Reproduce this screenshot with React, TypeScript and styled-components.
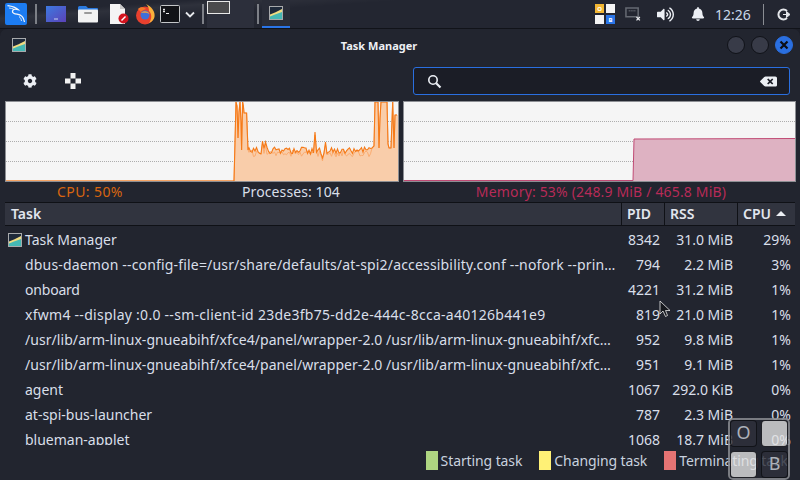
import React from 'react';
import styled, { createGlobalStyle } from 'styled-components';
import { FaBackspace, FaBell, FaCog, FaVolumeUp } from 'react-icons/fa';

const GlobalStyle = createGlobalStyle`
  html, body {
    margin: 0;
    width: 800px;
    height: 480px;
    overflow: hidden;
    background: #1d1f28;
    font-family: 'Noto Sans', sans-serif;
  }
  * { box-sizing: border-box; }
`

const Screen = styled.div`
  position: relative;
  display: flex;
  flex-direction: column;
  width: 800px;
  height: 480px;
  overflow: hidden;
`

const Panel = styled.div`
  display: flex;
  align-items: center;
  height: 29px;
  flex-shrink: 0;
  padding: 0 0 0 5px;
  background:
    linear-gradient(176deg, transparent 0 16%, rgba(255,255,255,0.05) 22%, transparent 34%),
    #232631;
  border-bottom: 1px solid #111319;
`

const Launcher = styled.div<{ $width: number, $left?: number }>`
  display: flex;
  align-items: center;
  justify-content: center;
  width: ${p => p.$width}px;
  height: 26px;
  margin-left: ${p => p.$left ?? 0}px;
  flex-shrink: 0;
`

const Separator = styled.div<{ $left: number }>`
  width: 2px;
  height: 20px;
  margin-left: ${p => p.$left}px;
  background: #7d8087;
  flex-shrink: 0;
`

const Workspaces = styled.div`
  display: grid;
  grid-template-columns: 23px 24px;
  width: 47px;
  height: 28px;
  margin-left: 3px;
  background: #2c2f3b;
  align-self: flex-start;
  flex-shrink: 0;
`

const ActiveWorkspace = styled.div`
  width: 23px;
  height: 13px;
  margin-top: 1px;
  background: #4a4a4c;
  border: 1px solid #e8e8e8;
`

const TaskButton = styled.div`
  display: flex;
  align-items: center;
  justify-content: center;
  width: 28px;
  height: 28px;
  margin-left: 3px;
  background: #2a2d38;
  border-bottom: 2px solid #2a75e8;
  flex-shrink: 0;
`

const Spacer = styled.div`
  flex: 1;
`

const Tray = styled.div`
  display: flex;
  align-items: center;
  height: 28px;
  color: #eceff4;
`

const KeyGrid = styled.div`
  display: grid;
  grid-template-columns: 11px 11px;
  grid-template-rows: 11px 11px;
  gap: 0;
  width: 22px;
  margin-right: 9px;
`

const KeyTile = styled.div<{ $bg: string }>`
  display: flex;
  align-items: center;
  justify-content: center;
  background: ${p => p.$bg};
  border: 0.5px solid #232631;
  color: #fff;
  font-size: 6px;
  font-weight: 700;
  line-height: 1;
`

const Clock = styled.span`
  width: 34px;
  margin-left: 10px;
  font-size: 14px;
  color: #c9d8ea;
`

const TraySep = styled.div`
  width: 1px;
  height: 21px;
  margin: 0 13px 0 14px;
  background: #8a8d93;
`

const Win = styled.div`
  flex: 1;
  display: flex;
  flex-direction: column;
  min-height: 0;
  background: #22252f;
  border-radius: 7px 7px 0 0;
`

const TitleBar = styled.div`
  position: relative;
  display: flex;
  align-items: center;
  justify-content: space-between;
  height: 32px;
  padding: 0 7px 0 12px;
  flex-shrink: 0;
`

const Title = styled.div`
  position: absolute;
  left: 0;
  right: 42px;
  text-align: center;
  font-size: 11px;
  font-weight: 700;
  color: #eef0f4;
`

const WinButtons = styled.div`
  display: flex;
  gap: 6px;
  z-index: 1;
`

const WinButton = styled.div<{ $close?: boolean }>`
  display: flex;
  align-items: center;
  justify-content: center;
  width: 18px;
  height: 18px;
  border-radius: 50%;
  background: ${p => p.$close ? '#2a6fe0' : '#383b48'};
  border: 1px solid ${p => p.$close ? '#2a6fe0' : '#101218'};
`

const Toolbar = styled.div`
  display: flex;
  align-items: center;
  height: 40px;
  padding: 0 10px 0 23px;
  flex-shrink: 0;
  color: #eceff4;
`

const ToolIcon = styled.div<{ $width: number }>`
  display: flex;
  align-items: center;
  width: ${p => p.$width}px;
  margin-top: -1px;
`

const Search = styled.div`
  display: flex;
  align-items: center;
  justify-content: space-between;
  width: 377px;
  height: 28px;
  margin-left: auto;
  padding: 0 12px 0 13px;
  background: #1b1d26;
  border: 1px solid #2a6fe0;
  border-radius: 3px;
  color: #eceff4;
`

const Graphs = styled.div`
  display: grid;
  grid-template-columns: 394px 393px;
  gap: 4px;
  padding: 0 5px;
  flex-shrink: 0;
`

const Graph = styled.div`
  height: 81px;
  background: #f5f5f5;
  border: 1px solid #8d8f94;
  svg { display: block; }
`

const Status = styled.div`
  display: grid;
  grid-template-columns: 170px 232px 1fr;
  height: 19px;
  padding: 0 5px;
  font-size: 14px;
  line-height: 19px;
  text-align: center;
  flex-shrink: 0;
`

const StatusText = styled.div<{ $color: string, $tracking?: number }>`
  color: ${p => p.$color};
  letter-spacing: ${p => p.$tracking ?? 0}px;
  white-space: nowrap;
`

const columns = '616px 43px 73px 58px';

const Header = styled.div`
  display: grid;
  grid-template-columns: ${columns};
  height: 24px;
  margin: 1px 5px 0;
  background: #31343f;
  border-top: 1px solid #0f1116;
  border-bottom: 1px solid #0f1116;
  flex-shrink: 0;
`

const HeaderCell = styled.div<{ $first?: boolean }>`
  display: flex;
  align-items: center;
  gap: 5px;
  padding-left: ${p => p.$first ? 6 : 5}px;
  padding-bottom: 1px;
  border-left: ${p => p.$first ? 'none' : '1px solid #0f1116'};
  font-size: 14px;
  font-weight: 600;
  color: #e2e6ee;
`

const SortArrow = styled.div`
  width: 0;
  height: 0;
  border-left: 5px solid transparent;
  border-right: 5px solid transparent;
  border-bottom: 5px solid #eceff4;
`

const Rows = styled.div`
  flex: 1;
  min-height: 0;
  overflow: hidden;
  padding: 1px 5px 0;
`

const Row = styled.div`
  display: grid;
  grid-template-columns: ${columns};
  height: 25px;
  align-items: center;
  font-size: 14px;
  color: #d9dfe9;
`

const TaskCell = styled.div<{ $top: boolean }>`
  display: flex;
  align-items: center;
  gap: 3px;
  padding-left: ${p => p.$top ? 3 : 20}px;
  padding-right: 4px;
  min-width: 0;
`

const TaskName = styled.span<{ $tracking: number }>`
  white-space: nowrap;
  letter-spacing: ${p => p.$tracking}px;
`

const NumCell = styled.div`
  padding-right: 4px;
  text-align: right;
  white-space: nowrap;
`

const Legend = styled.div`
  display: flex;
  align-items: center;
  justify-content: flex-end;
  height: 35px;
  padding: 0 12px 5px 0;
  font-size: 14px;
  letter-spacing: -0.1px;
  color: #c9d2df;
  flex-shrink: 0;
`

const LegendItem = styled.div`
  display: flex;
  align-items: center;
  gap: 3px;
  margin-left: 17px;
  white-space: nowrap;
`

const Swatch = styled.div<{ $color: string }>`
  width: 12px;
  height: 19px;
  background: ${p => p.$color};
`

const StickyKeys = styled.div`
  position: absolute;
  left: 728px;
  top: 418px;
  display: grid;
  grid-template-columns: 27px 27px;
  grid-template-rows: 27px 27px;
  gap: 4px;
  width: 62px;
  height: 62px;
  border-radius: 5px;
  border: 2px solid rgba(138, 140, 144, 0.85);
`

const StickyKey = styled.div<{ $lit?: boolean }>`
  display: flex;
  align-items: center;
  justify-content: center;
  padding-bottom: 3px;
  border-radius: 4px;
  border: 1px solid rgba(15, 17, 22, 0.9);
  background: ${p => p.$lit ? 'rgba(226, 226, 226, 0.8)' : 'rgba(46, 49, 60, 0.82)'};
  color: #adb2ba;
  font-size: 18px;
`

const Pointer = styled.svg`
  position: absolute;
  left: 659px;
  top: 300px;
`

const AppIcon: React.FC<{ size?: number }> = ({ size = 14 }) => (
  <svg width={size} height={size} viewBox="0 0 14 14">
    <rect x="0.5" y="0.5" width="13" height="13" fill="#1f2a3a" stroke="#a8aaac" />
    <path d="M1 13V8.5L6 6.5L13 3V13Z" fill="#f0dc82" />
    <path d="M1 13V10.5L6 8.5L13 6V13Z" fill="#45b8b4" />
  </svg>
);

const KaliLogo = () => (
  <svg width="22" height="22" viewBox="0 0 22 22">
    <rect x="0" y="0" width="22" height="22" rx="2" fill="#1c7cf2" />
    <path d="M2.5 2.5C6 3 10 3.5 13 6.5C10.5 5.8 8 6.3 7.5 8C7 10 9.5 11 12 11.2C15.5 11.5 18.5 13 19.5 19" fill="none" stroke="#f2f6fb" strokeWidth="1.3" />
    <path d="M4 5C5.5 5.2 7 5.4 8.5 6M14 13.5C15.5 14.5 16.2 16 16.5 18" fill="none" stroke="#f2f6fb" strokeWidth="0.9" />
  </svg>
);

const DesktopIcon = () => (
  <svg width="20" height="16" viewBox="0 0 20 16">
    <defs>
      <linearGradient id="desk" x1="0" y1="0" x2="1" y2="1">
        <stop offset="0" stopColor="#3d7ae0" />
        <stop offset="1" stopColor="#5b42b8" />
      </linearGradient>
    </defs>
    <rect width="20" height="16" fill="url(#desk)" />
    <rect x="8" y="12.5" width="4" height="1" fill="#c9d4f2" />
  </svg>
);

const FolderIcon = () => (
  <svg width="22" height="18" viewBox="0 0 22 18">
    <path d="M1 2.5Q1 1 2.5 1H9L11 3H20Q21 3 21 4V6H1Z" fill="#2a7ae0" />
    <rect x="1" y="4.5" width="20" height="13" rx="1" fill="#f2f2f2" />
    <rect x="7" y="7" width="8" height="2" rx="1" fill="#9a9a9a" />
  </svg>
);

const DocIcon = () => (
  <svg width="20" height="20" viewBox="0 0 20 20">
    <path d="M1 0H11L16 5V20H1Z" fill="#f4f4f4" />
    <path d="M11 0L16 5H11Z" fill="#c8c8c8" />
    <circle cx="14.5" cy="14.5" r="5" fill="#d3141f" />
    <path d="M12.5 16.5L16.5 12.5" stroke="#fff" strokeWidth="1.5" />
  </svg>
);

const FirefoxIcon = () => (
  <svg width="21" height="21" viewBox="0 0 21 21">
    <circle cx="10" cy="11.5" r="9" fill="#e8402e" />
    <path d="M11 0C17 3 20.5 8 19.5 13C19 15.5 17 18 14 19C17 15 17 10 14 7C14 4 13 2 11 0Z" fill="#fbb03b" />
    <path d="M3 5C5 2.5 9 3 11 5C9 5.5 7 6.5 6 8Z" fill="#f5792a" />
    <circle cx="10" cy="11" r="4.5" fill="#3f6fd8" />
    <path d="M6 9C8 6.5 13 6.5 14.5 10C12.5 8.5 9.5 8.5 6 9Z" fill="#f5a13a" />
  </svg>
);

const TerminalIcon = () => (
  <svg width="20" height="18" viewBox="0 0 20 18">
    <rect x="0.5" y="0.5" width="19" height="17" rx="1" fill="#121317" stroke="#c4c6c8" />
    <path d="M4 3.5V7.5M3 4.5H5M3 6.5H5" stroke="#eee" strokeWidth="0.9" />
    <path d="M6 8.5H9" stroke="#eee" strokeWidth="1" />
  </svg>
);

const Chevron = () => (
  <svg width="10" height="7" viewBox="0 0 10 7">
    <path d="M1 1.5L5 5.5L9 1.5" fill="none" stroke="#e6e8ec" strokeWidth="1.8" />
  </svg>
);

const NetworkIcon = () => (
  <svg width="16" height="16" viewBox="0 0 17 16">
    <path d="M1 1.5H14V11H1Z" fill="none" stroke="#666a73" strokeWidth="1.6" />
    <path d="M4 4.5H11" stroke="#666a73" strokeWidth="1.5" strokeDasharray="1 1" />
    <path d="M12.2 11.2L15.8 14.8M15.8 11.2L12.2 14.8" stroke="#e6e8ec" strokeWidth="1.4" />
  </svg>
);

const LogoutIcon = () => (
  <svg width="15" height="13" viewBox="0 0 15 13">
    <path d="M10 3A5 5 0 1 0 10 10" fill="none" stroke="#e4e6ea" strokeWidth="2" />
    <path d="M6 6.5H11M9.5 3.5L13 6.5L9.5 9.5Z" fill="#e4e6ea" stroke="#e4e6ea" strokeWidth="1" />
  </svg>
);

const MoveIcon = () => (
  <svg width="16" height="16" viewBox="0 0 16 16" fill="#f2f2f2">
    <rect x="5.5" y="0" width="5" height="5.5" />
    <rect x="0" y="5.5" width="5.5" height="5" />
    <rect x="10.5" y="5.5" width="5.5" height="5" />
    <rect x="5.5" y="10.5" width="5" height="5.5" />
  </svg>
);

const SearchGlyph = () => (
  <svg width="15" height="15" viewBox="0 0 15 15">
    <circle cx="6" cy="6" r="4.2" fill="none" stroke="#eceff4" strokeWidth="1.6" />
    <path d="M9.2 9.2L13.5 13.5" stroke="#eceff4" strokeWidth="2.2" />
  </svg>
);

const CloseGlyph = () => (
  <svg width="10" height="10" viewBox="0 0 10 10">
    <path d="M1.5 1.5L8.5 8.5M8.5 1.5L1.5 8.5" stroke="#0c0e14" strokeWidth="2.2" />
  </svg>
);

const GridLines = ({ width }: { width: number }) => (
  <g stroke="#adadad" strokeDasharray="1 1">
    <path d={`M0 19.5H${width}M0 39.5H${width}M0 59.5H${width}`} />
  </g>
);

// plateau noise is fixed so that every render draws the same trace
const noise = (i: number) => {
  const v = Math.sin(i * 12.9898) * 43758.5453;
  return v - Math.floor(v);
};

const cpuHead: [number, number][] = [
  [228, 79], [229, 40], [230, 0], [231, 4], [232, 36], [233, 10], [234, 0], [235, 20], [235.6, 48],
  [236.6, 0], [237.4, 4], [238, 11], [240.6, 11], [242, 48],
];

const cpuTail: [number, number][] = [
  [366, 46], [368, 44], [369, 0], [372, 0], [373, 46], [374, 16], [375, 0], [381, 0],
  [382, 42], [383, 46], [385, 46], [386.7, 0], [388, 46], [389, 13], [391, 13],
];

const cpuSeries = (offset: number): [number, number][] => {
  const pts: [number, number][] = [[0, 79], [227, 79], ...cpuHead];
  for (let x = 243; x < 366; x += 1.5) {
    let y = 45 + noise(x + offset) * 7;
    if (x > 255 && x < 257) y = 39;
    if (x > 259 && x < 261) y = 40;
    if (x > 308 && x < 310) y = 30;
    if (x > 315 && x < 317) y = 56;
    if (x > 318 && x < 320) y = 40;
    pts.push([x, y]);
  }
  return [...pts, ...cpuTail];
};

const toLine = (pts: [number, number][]) => pts.map(([x, y]) => `${x},${y}`).join(' ');

const CpuChart = () => {
  const line = cpuSeries(0);
  const low = cpuSeries(7).map(([x, y]): [number, number] => [x, x > 243 && x < 366 ? y + 3 : y]);
  return (
    <svg width="392" height="79" viewBox="0 0 392 79">
      <GridLines width={392} />
      <polygon points={`${toLine(line)} 392,13 392,79 0,79`} fill="#f9cdaa" />
      <polyline points={toLine(low)} fill="none" stroke="#fbac70" strokeWidth="1" />
      <polyline points={toLine(line)} fill="none" stroke="#f57a18" strokeWidth="1.1" />
    </svg>
  );
};

const MemoryChart = () => (
  <svg width="391" height="79" viewBox="0 0 391 79">
    <GridLines width={391} />
    <polygon points="229,79 230,37 391,37 391,79" fill="#deb2c2" />
    <polyline points="0,78.5 229,78.5 230,37 391,36.5" fill="none" stroke="#c04a74" strokeWidth="1" />
  </svg>
);

interface Task {
  name: string,
  pid: number,
  rss: string,
  cpu: string,
  top?: boolean,
  tracking?: number,
}

const tasks: Task[] = [
  { name: 'Task Manager', pid: 8342, rss: '31.0 MiB', cpu: '29%', top: true },
  { name: 'dbus-daemon --config-file=/usr/share/defaults/at-spi2/accessibility.conf --nofork --prin…', pid: 794, rss: '2.2 MiB', cpu: '3%', tracking: 0.17 },
  { name: 'onboard', pid: 4221, rss: '31.2 MiB', cpu: '1%', tracking: -0.2 },
  { name: 'xfwm4 --display :0.0 --sm-client-id 23de3fb75-dd2e-444c-8cca-a40126b441e9', pid: 819, rss: '21.0 MiB', cpu: '1%', tracking: 0.27 },
  { name: '/usr/lib/arm-linux-gnueabihf/xfce4/panel/wrapper-2.0 /usr/lib/arm-linux-gnueabihf/xfc…', pid: 952, rss: '9.8 MiB', cpu: '1%', tracking: 0.06 },
  { name: '/usr/lib/arm-linux-gnueabihf/xfce4/panel/wrapper-2.0 /usr/lib/arm-linux-gnueabihf/xfc…', pid: 951, rss: '9.1 MiB', cpu: '1%', tracking: 0.06 },
  { name: 'agent', pid: 1067, rss: '292.0 KiB', cpu: '0%' },
  { name: 'at-spi-bus-launcher', pid: 787, rss: '2.3 MiB', cpu: '0%' },
  { name: 'blueman-applet', pid: 1068, rss: '18.7 MiB', cpu: '0%' },
];

const App: React.FC = () => {
  return (
    <Screen>
      <GlobalStyle />
      <Panel>
        <KaliLogo />
        <Separator $left={8} />
        <Launcher $width={20} $left={9}><DesktopIcon /></Launcher>
        <Launcher $width={22} $left={11}><FolderIcon /></Launcher>
        <Launcher $width={20} $left={10}><DocIcon /></Launcher>
        <Launcher $width={21} $left={6}><FirefoxIcon /></Launcher>
        <Launcher $width={20} $left={4}><TerminalIcon /></Launcher>
        <Launcher $width={10} $left={5}><Chevron /></Launcher>
        <Separator $left={7} />
        <Workspaces>
          <ActiveWorkspace />
        </Workspaces>
        <Separator $left={3} />
        <TaskButton><AppIcon /></TaskButton>
        <Spacer />
        <Tray>
          <KeyGrid>
            <KeyTile $bg="#f2b632">O</KeyTile>
            <KeyTile $bg="#f4f4f4" />
            <KeyTile $bg="#f4f4f4" />
            <KeyTile $bg="#2a75e8">B</KeyTile>
          </KeyGrid>
          <NetworkIcon />
          <Launcher $width={18} $left={15}><FaVolumeUp size={17} /></Launcher>
          <Launcher $width={14} $left={17}><FaBell size={14} /></Launcher>
          <Clock>12:26</Clock>
          <TraySep />
          <LogoutIcon />
          <Launcher $width={8} />
        </Tray>
      </Panel>
      <Win>
        <TitleBar>
          <AppIcon />
          <Title>Task Manager</Title>
          <WinButtons>
            <WinButton />
            <WinButton />
            <WinButton $close><CloseGlyph /></WinButton>
          </WinButtons>
        </TitleBar>
        <Toolbar>
          <ToolIcon $width={42}><FaCog size={14} /></ToolIcon>
          <ToolIcon $width={16}><MoveIcon /></ToolIcon>
          <Search>
            <SearchGlyph />
            <FaBackspace size={17} />
          </Search>
        </Toolbar>
        <Graphs>
          <Graph><CpuChart /></Graph>
          <Graph><MemoryChart /></Graph>
        </Graphs>
        <Status>
          <StatusText $color="#d9650f" $tracking={0.4}>CPU: 50%</StatusText>
          <StatusText $color="#d9dfe9" $tracking={0.1}>Processes: 104</StatusText>
          <StatusText $color="#b72b58" $tracking={0.17}>Memory: 53% (248.9 MiB / 465.8 MiB)</StatusText>
        </Status>
        <Header>
          <HeaderCell $first>Task</HeaderCell>
          <HeaderCell>PID</HeaderCell>
          <HeaderCell>RSS</HeaderCell>
          <HeaderCell>CPU<SortArrow /></HeaderCell>
        </Header>
        <Rows>
          {tasks.map(t => (
            <Row key={t.pid}>
              <TaskCell $top={!!t.top}>
                {t.top && <AppIcon />}
                <TaskName $tracking={t.tracking ?? 0}>{t.name}</TaskName>
              </TaskCell>
              <NumCell>{t.pid}</NumCell>
              <NumCell>{t.rss}</NumCell>
              <NumCell>{t.cpu}</NumCell>
            </Row>
          ))}
        </Rows>
        <Legend>
          <LegendItem><Swatch $color="#aed581" />Starting task</LegendItem>
          <LegendItem><Swatch $color="#fff176" />Changing task</LegendItem>
          <LegendItem><Swatch $color="#e57373" />Terminating task</LegendItem>
        </Legend>
      </Win>
      <StickyKeys>
        <StickyKey>O</StickyKey>
        <StickyKey $lit />
        <StickyKey $lit />
        <StickyKey>B</StickyKey>
      </StickyKeys>
      <Pointer width="12" height="18" viewBox="0 0 12 18">
        <path d="M1 1V14L4 11L6.5 16.5L8.5 15.5L6.5 10.5H11Z" fill="#15171c" stroke="#e8e8e8" strokeWidth="0.8" />
      </Pointer>
    </Screen>
  );
};

export default App;
